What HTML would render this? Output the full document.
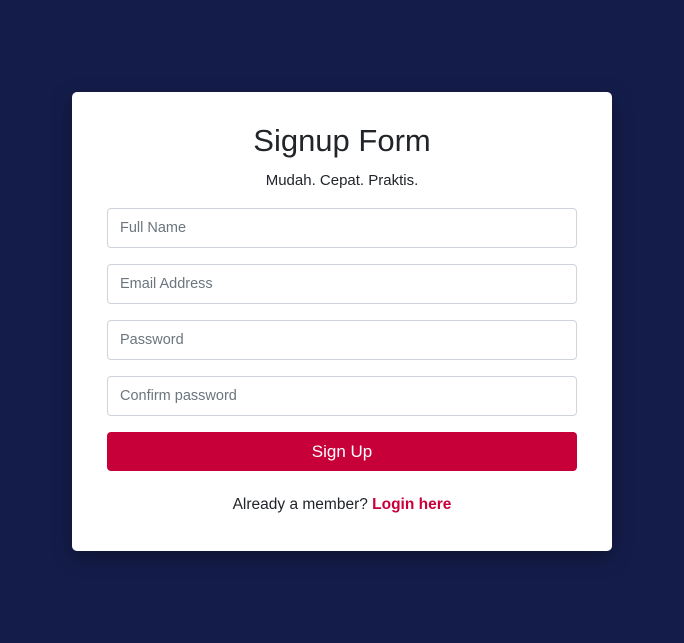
<!DOCTYPE html>
<html><head><style>
body{margin:0;width:684px;height:643px;background:#141d4a;font-family:"Liberation Sans",sans-serif;overflow:hidden;position:relative}
.card{position:absolute;left:72px;top:92px;width:540px;height:459px;background:#fff;border-radius:5px;box-shadow:0 6px 20px rgba(0,0,0,.35)}
h1{position:absolute;left:0;right:0;top:123px;margin:0;text-align:center;font-weight:400;font-size:31px;color:#212529}
.sub{position:absolute;left:0;right:0;top:172px;text-align:center;font-size:15px;color:#212529}
.in{position:absolute;left:107px;width:468px;height:38px;border:1px solid #ced4da;border-radius:4px;box-sizing:content-box;font-size:14.5px;color:#6c757d;line-height:39px;text-indent:12px}
.btn{position:absolute;left:107px;top:432px;width:470px;height:39px;background:#c8003a;border-radius:4px;color:#fff;text-align:center;line-height:39px;font-size:17px}
.foot{position:absolute;left:0;right:0;top:496px;text-align:center;font-size:15.5px;color:#212529}
.foot b{color:#c8003a;font-weight:600}
</style></head><body>
<div class="card"></div>
<h1>Signup Form</h1>
<div class="sub">Mudah. Cepat. Praktis.</div>
<div class="in" style="top:208px">Full Name</div>
<div class="in" style="top:264px">Email Address</div>
<div class="in" style="top:320px">Password</div>
<div class="in" style="top:376px">Confirm password</div>
<div class="btn">Sign Up</div>
<div class="foot">Already a member? <b>Login here</b></div>
</body></html>
